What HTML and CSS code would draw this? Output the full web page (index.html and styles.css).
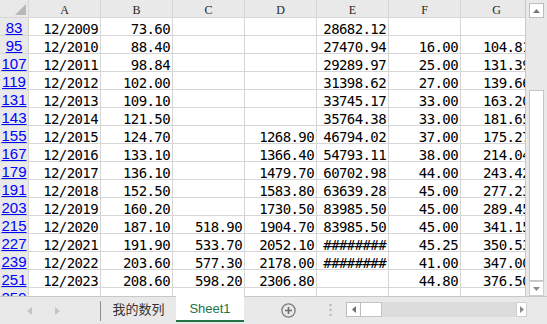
FILE: index.html
```html
<!DOCTYPE html>
<html lang="zh">
<head>
  <meta charset="UTF-8">
  <title>Sheet1</title>
  <link rel="stylesheet" href="styles.css">
</head>
<body>
  <div class="book">
    <div class="sheet">
      <div class="grid-wrap">
        <div class="grid">
          <div class="corner"><svg width="11" height="11" viewBox="0 0 11 11"><polygon points="11,0 11,11 0,11" fill="#b8b8b8"/></svg></div>
          <div class="ch">A</div><div class="ch">B</div><div class="ch">C</div><div class="ch">D</div><div class="ch">E</div><div class="ch">F</div><div class="ch">G</div>

          <div class="rh">83</div><div class="c">12/2009</div><div class="c">73.60</div><div class="c"></div><div class="c"></div><div class="c">28682.12</div><div class="c"></div><div class="c"></div>
          <div class="rh">95</div><div class="c">12/2010</div><div class="c">88.40</div><div class="c"></div><div class="c"></div><div class="c">27470.94</div><div class="c">16.00</div><div class="c">104.81</div>
          <div class="rh">107</div><div class="c">12/2011</div><div class="c">98.84</div><div class="c"></div><div class="c"></div><div class="c">29289.97</div><div class="c">25.00</div><div class="c">131.39</div>
          <div class="rh">119</div><div class="c">12/2012</div><div class="c">102.00</div><div class="c"></div><div class="c"></div><div class="c">31398.62</div><div class="c">27.00</div><div class="c">139.66</div>
          <div class="rh">131</div><div class="c">12/2013</div><div class="c">109.10</div><div class="c"></div><div class="c"></div><div class="c">33745.17</div><div class="c">33.00</div><div class="c">163.20</div>
          <div class="rh">143</div><div class="c">12/2014</div><div class="c">121.50</div><div class="c"></div><div class="c"></div><div class="c">35764.38</div><div class="c">33.00</div><div class="c">181.65</div>
          <div class="rh">155</div><div class="c">12/2015</div><div class="c">124.70</div><div class="c"></div><div class="c">1268.90</div><div class="c">46794.02</div><div class="c">37.00</div><div class="c">175.27</div>
          <div class="rh">167</div><div class="c">12/2016</div><div class="c">133.10</div><div class="c"></div><div class="c">1366.40</div><div class="c">54793.11</div><div class="c">38.00</div><div class="c">214.04</div>
          <div class="rh">179</div><div class="c">12/2017</div><div class="c">136.10</div><div class="c"></div><div class="c">1479.70</div><div class="c">60702.98</div><div class="c">44.00</div><div class="c">243.42</div>
          <div class="rh">191</div><div class="c">12/2018</div><div class="c">152.50</div><div class="c"></div><div class="c">1583.80</div><div class="c">63639.28</div><div class="c">45.00</div><div class="c">277.23</div>
          <div class="rh">203</div><div class="c">12/2019</div><div class="c">160.20</div><div class="c"></div><div class="c">1730.50</div><div class="c">83985.50</div><div class="c">45.00</div><div class="c">289.45</div>
          <div class="rh">215</div><div class="c">12/2020</div><div class="c">187.10</div><div class="c">518.90</div><div class="c">1904.70</div><div class="c">83985.50</div><div class="c">45.00</div><div class="c">341.15</div>
          <div class="rh">227</div><div class="c">12/2021</div><div class="c">191.90</div><div class="c">533.70</div><div class="c">2052.10</div><div class="c">########</div><div class="c">45.25</div><div class="c">350.53</div>
          <div class="rh">239</div><div class="c">12/2022</div><div class="c">203.60</div><div class="c">577.30</div><div class="c">2178.00</div><div class="c">########</div><div class="c">41.00</div><div class="c">347.00</div>
          <div class="rh">251</div><div class="c">12/2023</div><div class="c">208.60</div><div class="c">598.20</div><div class="c">2306.80</div><div class="c"></div><div class="c">44.80</div><div class="c">376.50</div>
          <div class="rh">259</div><div class="c"></div><div class="c"></div><div class="c"></div><div class="c"></div><div class="c"></div><div class="c"></div><div class="c"></div>
        </div>
      </div>
      <div class="vscroll">
        <div class="sbtn"><svg width="7" height="4" viewBox="0 0 7 4"><polygon points="0,4 7,4 3.5,0" fill="#7a7a7a"/></svg></div>
        <div class="vthumb"></div>
        <div class="sbtn down"><svg width="7" height="4" viewBox="0 0 7 4"><polygon points="0,0 7,0 3.5,4" fill="#8a8a8a"/></svg></div>
      </div>
    </div>

    <div class="tabbar">
      <div class="nav">
        <svg width="5" height="8" viewBox="0 0 5 8"><polygon points="5,0 5,8 0,4" fill="#c4c4c4"/></svg>
        <svg width="5" height="8" viewBox="0 0 5 8"><polygon points="0,0 0,8 5,4" fill="#c4c4c4"/></svg>
      </div>
      <div class="sep"></div>
      <div class="tab">我的数列</div>
      <div class="tab active">Sheet1</div>
      <svg class="add" width="15" height="15" viewBox="0 0 15 15"><circle cx="7.5" cy="7.5" r="6.6" fill="none" stroke="#7b7b7b" stroke-width="1.3"/><path d="M7.5 4v7M4 7.5h7" stroke="#6e6e6e" stroke-width="1.6"/></svg>
      <svg class="dots" width="3" height="13" viewBox="0 0 3 13"><rect x="0.5" y="0" width="2" height="2" fill="#b4b4b4"/><rect x="0.5" y="5" width="2" height="2" fill="#b4b4b4"/><rect x="0.5" y="10" width="2" height="2" fill="#b4b4b4"/></svg>
      <div class="hscroll">
        <div class="hbtn"><svg width="4" height="7" viewBox="0 0 4 7"><polygon points="4,0 4,7 0,3.5" fill="#6e6e6e"/></svg></div>
        <div class="hthumb"></div>
        <div class="htrack"></div>
        <div class="hbtn right"><svg width="4" height="7" viewBox="0 0 4 7"><polygon points="0,0 0,7 4,3.5" fill="#8a8a8a"/></svg></div>
      </div>
    </div>
  </div>
</body>
</html>
```

FILE: styles.css
```css
body {
  margin: 0;
  background: #fff;
  overflow: hidden;
}
.book {
  width: 547px;
  height: 324px;
  display: flex;
  flex-direction: column;
}
.sheet {
  display: flex;
  height: 296px;
  overflow: hidden;
}
.grid-wrap {
  width: 525px;
  flex: none;
  overflow: hidden;
}
.grid {
  display: grid;
  grid-template-columns: 28px repeat(7, 71px);
  grid-auto-rows: 17px;
  gap: 1px;
  background: #d6d6d6;
  width: max-content;
}
.corner {
  background: #e9e9e9;
  display: flex;
  justify-content: flex-end;
  align-items: flex-end;
  padding: 0 2px 2px 0;
}
.ch {
  background: #e9e9e9;
  text-align: center;
  font-family: "Liberation Serif", serif;
  font-size: 12px;
  line-height: 14px;
  padding-top: 3px;
  box-sizing: border-box;
  color: #262626;
}
.rh {
  background: #e9e9e9;
  text-align: center;
  font-family: "Liberation Sans", Arial, sans-serif;
  font-size: 15px;
  line-height: 15px;
  padding-top: 2px;
  box-sizing: border-box;
  color: #0000ff;
  text-decoration: underline;
  text-underline-offset: 1px;
}
.c {
  background: #fff;
  text-align: right;
  padding: 5px 2px 0 0;
  box-sizing: border-box;
  font-family: "DejaVu Sans Mono", monospace;
  font-size: 14px;
  letter-spacing: -0.6px;
  line-height: 12px;
  color: #000;
  white-space: nowrap;
}

/* vertical scrollbar */
.vscroll {
  width: 22px;
  flex: none;
  box-sizing: border-box;
  border-left: 1px solid #c8c8c8;
  background: #e9e9e9;
  padding: 3px 3px 0 3px;
  display: flex;
  flex-direction: column;
}
.sbtn {
  height: 15px;
  box-sizing: border-box;
  background: #fff;
  border: 1px solid #bdbdbd;
  display: flex;
  align-items: center;
  justify-content: center;
}
.sbtn.down {
  margin-top: auto;
  border-color: #d0d0d0;
}
.vthumb {
  margin-top: 72px;
  height: 191px;
  box-sizing: border-box;
  background: #fff;
  border: 1px solid #c4c4c4;
}

/* sheet tabs */
.tabbar {
  height: 28px;
  box-sizing: border-box;
  border-top: 1px solid #c8c8c8;
  background: #e9e9e9;
  display: flex;
  align-items: center;
  font-family: "Liberation Sans", "Noto Sans CJK SC", sans-serif;
  font-size: 13px;
}
.nav {
  width: 100px;
  flex: none;
  display: flex;
  align-items: center;
  gap: 23px;
  padding-left: 27px;
  box-sizing: border-box;
}
.sep {
  width: 1px;
  height: 20px;
  background: #8e8e8e;
  flex: none;
}
.tab {
  align-self: flex-start;
  margin-top: -1px;
  height: 26px;
  width: 75px;
  box-sizing: border-box;
  border-bottom: 2px solid transparent;
  display: flex;
  align-items: center;
  justify-content: center;
  color: #333;
  flex: none;
}
.tab.active {
  width: 68px;
  background: #fff;
  color: #217346;
  border-bottom-color: #217346;
}
.add {
  margin-left: 37px;
  flex: none;
}
.dots {
  margin-left: 33px;
  flex: none;
}
.hscroll {
  margin-left: 14px;
  width: 181px;
  height: 15px;
  align-self: flex-start;
  margin-top: 5px;
  display: flex;
  flex: none;
}
.hbtn {
  width: 15px;
  box-sizing: border-box;
  background: #fff;
  border: 1px solid #bdbdbd;
  display: flex;
  align-items: center;
  justify-content: center;
}
.hbtn.right {
  width: 11px;
  border-color: #d0d0d0;
}
.hthumb {
  width: 21px;
  box-sizing: border-box;
  background: #fff;
  border: 1px solid #c4c4c4;
  border-left: none;
}
.htrack {
  flex: 1;
  background: #dcdcdc;
}
```
